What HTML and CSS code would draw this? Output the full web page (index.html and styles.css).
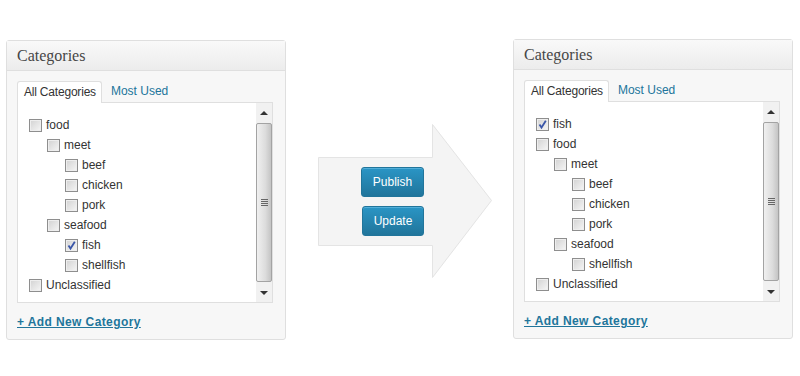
FILE: index.html
```html
<!DOCTYPE html>
<html>
<head>
<meta charset="utf-8">
<link rel="stylesheet" href="styles.css">
</head>
<body>
<div class="page">
  <div class="panel">
    <div class="panel-head"><h3 class="title">Categories</h3></div>
    <div class="panel-body">
      <div class="tabs">
        <span class="tab active">All Categories</span>
        <span class="tab link">Most Used</span>
      </div>
      <div class="listbox">
        <ul class="tree">
          <li><div class="row"><span class="cb"></span>food</div>
            <ul>
              <li><div class="row"><span class="cb"></span>meet</div>
                <ul>
                  <li><div class="row"><span class="cb"></span>beef</div></li>
                  <li><div class="row"><span class="cb"></span>chicken</div></li>
                  <li><div class="row"><span class="cb"></span>pork</div></li>
                </ul>
              </li>
              <li><div class="row"><span class="cb"></span>seafood</div>
                <ul>
                  <li><div class="row"><span class="cb checked"><svg viewBox="0 0 11 11" width="11" height="11"><path d="M2.5 5.5 L4.5 8.5 L8.8 1.8" fill="none" stroke="#3a56a8" stroke-width="1.8"/></svg></span>fish</div></li>
                  <li><div class="row"><span class="cb"></span>shellfish</div></li>
                </ul>
              </li>
            </ul>
          </li>
          <li><div class="row"><span class="cb"></span>Unclassified</div></li>
        </ul>
        <div class="scrollbar">
          <div class="sb-btn"><span class="tri-up"></span></div>
          <div class="thumb"><span class="grip"></span></div>
          <div class="sb-btn"><span class="tri-down"></span></div>
        </div>
      </div>
      <a class="add" href="#">+ Add New Category</a>
    </div>
  </div>

  <div class="middle">
    <svg class="arrow" viewBox="0 0 175 155" width="175" height="155">
      <polygon points="0.5,33.5 114.5,33.5 114.5,0.5 173.5,76.5 114.5,153.5 114.5,121.5 0.5,121.5" fill="#f4f4f4" stroke="#e4e4e4" stroke-width="1"/>
    </svg>
    <div class="buttons">
      <span class="btn">Publish</span>
      <span class="btn">Update</span>
    </div>
  </div>

  <div class="panel right">
    <div class="panel-head"><h3 class="title">Categories</h3></div>
    <div class="panel-body">
      <div class="tabs">
        <span class="tab active">All Categories</span>
        <span class="tab link">Most Used</span>
      </div>
      <div class="listbox">
        <ul class="tree">
          <li><div class="row"><span class="cb checked"><svg viewBox="0 0 11 11" width="11" height="11"><path d="M2.5 5.5 L4.5 8.5 L8.8 1.8" fill="none" stroke="#3a56a8" stroke-width="1.8"/></svg></span>fish</div></li>
          <li><div class="row"><span class="cb"></span>food</div>
            <ul>
              <li><div class="row"><span class="cb"></span>meet</div>
                <ul>
                  <li><div class="row"><span class="cb"></span>beef</div></li>
                  <li><div class="row"><span class="cb"></span>chicken</div></li>
                  <li><div class="row"><span class="cb"></span>pork</div></li>
                </ul>
              </li>
              <li><div class="row"><span class="cb"></span>seafood</div>
                <ul>
                  <li><div class="row"><span class="cb"></span>shellfish</div></li>
                </ul>
              </li>
            </ul>
          </li>
          <li><div class="row"><span class="cb"></span>Unclassified</div></li>
        </ul>
        <div class="scrollbar">
          <div class="sb-btn"><span class="tri-up"></span></div>
          <div class="thumb"><span class="grip"></span></div>
          <div class="sb-btn"><span class="tri-down"></span></div>
        </div>
      </div>
      <a class="add" href="#">+ Add New Category</a>
    </div>
  </div>
</div>
</body>
</html>
```

FILE: styles.css
```css
* { box-sizing: border-box; }
html, body { margin: 0; padding: 0; background: #fff; }
body { font-family: "Liberation Sans", Arial, sans-serif; font-size: 12px; color: #333; }

.page {
  display: flex;
  align-items: flex-start;
  padding: 40px 0 0 6px;
  width: 800px;
  height: 376px;
}

.panel {
  width: 280px;
  height: 300px;
  border: 1px solid #dfdfdf;
  border-radius: 3px;
  background: #f7f7f7;
  flex: none;
}
.panel.right { margin-top: -1px; }

.panel-head {
  height: 30px;
  border-bottom: 1px solid #dfdfdf;
  background: linear-gradient(to bottom, #f9f9f9, #ececec);
  padding-left: 10px;
  display: flex;
  align-items: center;
}
.title {
  margin: 0;
  font-family: "Liberation Serif", "Times New Roman", serif;
  font-weight: normal;
  font-size: 16px;
  color: #464646;
  padding-top: 1px;
}

.panel-body { padding: 10px 12px 0 10px; }

.tabs { display: flex; height: 21px; align-items: stretch; }
.tab { padding: 0 6px; line-height: 20px; }
.tab.active {
  background: #fff;
  border: 1px solid #dfdfdf;
  border-bottom: none;
  border-radius: 3px 3px 0 0;
  color: #333;
  position: relative;
  z-index: 1;
  height: 22px;
  padding: 0 5px 0 6px;
  letter-spacing: -0.2px;
}
.tab.link { color: #21759b; padding-left: 9px; }

.listbox {
  height: 201px;
  width: 256px;
  border: 1px solid #dfdfdf;
  background: #fff;
  display: flex;
}

.tree { list-style: none; margin: 0; padding: 12px 0 0 11px; flex: 1; }
.tree ul { list-style: none; margin: 0; padding: 0 0 0 18px; }
.row { height: 20px; display: flex; align-items: center; white-space: nowrap; }

.cb {
  width: 13px;
  height: 13px;
  border: 1px solid #8e8e8e;
  background: linear-gradient(135deg, #d2d2d2, #f6f6f6);
  box-shadow: inset 0 0 0 1px #eee;
  margin-right: 4px;
  flex: none;
  display: flex;
  align-items: center;
  justify-content: center;
}
.cb svg { display: block; }

.scrollbar {
  width: 16px;
  background: #f1f1f1;
  display: flex;
  flex-direction: column;
  flex: none;
}
.sb-btn {
  height: 19px;
  display: flex;
  align-items: center;
  justify-content: center;
}
.tri-up { width: 0; height: 0; border-left: 4px solid transparent; border-right: 4px solid transparent; border-bottom: 4px solid #333; }
.tri-down { width: 0; height: 0; border-left: 4px solid transparent; border-right: 4px solid transparent; border-top: 4px solid #333; }
.thumb {
  flex: 1;
  margin: 1px 0;
  border: 1px solid #a3a3a3;
  border-radius: 2px;
  background: linear-gradient(to right, #f0f0f0, #dcdcdc 60%, #c4c4c4);
  display: flex;
  align-items: center;
  justify-content: center;
}
.grip {
  width: 7px;
  height: 7px;
  background: repeating-linear-gradient(to bottom, #666 0 1px, transparent 1px 2px);
}

.add {
  display: inline-block;
  margin-top: 12px;
  color: #21759b;
  font-weight: bold;
  font-size: 12px;
  letter-spacing: 0.4px;
  text-decoration: underline;
}

.middle {
  width: 227px;
  height: 300px;
  position: relative;
  flex: none;
}
.arrow { position: absolute; left: 32px; top: 84px; }
.buttons {
  position: relative;
  display: flex;
  flex-direction: column;
  gap: 9px;
  padding: 127px 0 0 75px;
}
.btn {
  width: 63px;
  height: 30px;
  border: 1px solid #21759b;
  border-radius: 3px;
  background: linear-gradient(to bottom, #2a95c5, #21759b);
  color: #fff;
  display: flex;
  align-items: center;
  justify-content: center;
  font-size: 12px;
  box-shadow: inset 0 1px 0 rgba(120,200,237,0.5);
}
.btn + .btn { margin-left: 1px; width: 62px; }
```
